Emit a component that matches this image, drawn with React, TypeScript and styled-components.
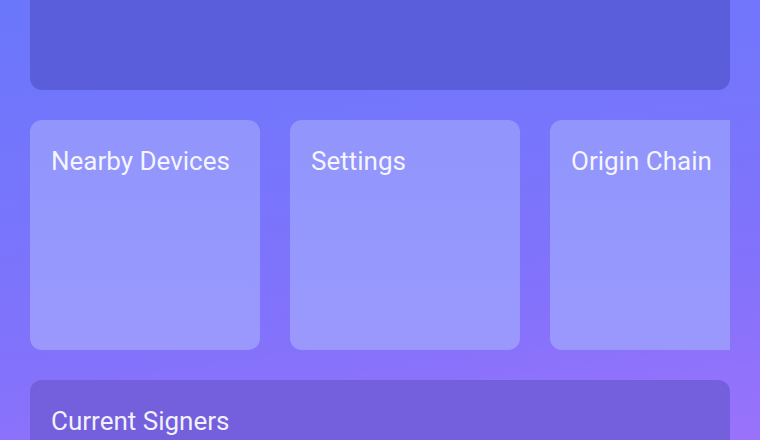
import React from "react";
import styled, { createGlobalStyle } from "styled-components";

const GlobalStyle = createGlobalStyle`
  html, body {
    margin: 0;
    padding: 0;
  }
  body {
    font-family: Roboto, "Liberation Sans", sans-serif;
    overflow: hidden;
  }
`;

const tiles = ["Nearby Devices", "Settings", "Origin Chain"];

const App = () => {
  return (
    <>
      <GlobalStyle />
      <Page>
        <Banner />
        <Scroller>
          {tiles.map((t) => (
            <Tile key={t}>
              <Title>{t}</Title>
            </Tile>
          ))}
        </Scroller>
        <Panel>
          <Title>Current Signers</Title>
        </Panel>
      </Page>
    </>
  );
};

export default App;

const Page = styled.div`
  width: 760px;
  height: 440px;
  box-sizing: border-box;
  padding: 0 30px;
  display: flex;
  flex-direction: column;
  gap: 30px;
  overflow: hidden;
  background: linear-gradient(172deg, #6a76fb 0%, #7676fc 35%, #8472fb 70%, #9a72fb 100%);
`;

const Banner = styled.div`
  flex: none;
  height: 130px;
  margin-top: -40px;
  border-radius: 12px;
  background-color: #5a5edb;
`;

const Scroller = styled.div`
  flex: none;
  display: flex;
  gap: 30px;
  width: 700px;
  overflow: hidden;
`;

const Tile = styled.div`
  flex: none;
  width: 230px;
  height: 230px;
  box-sizing: border-box;
  padding: 26px 21px;
  border-radius: 12px;
  background: linear-gradient(180deg, #9195fc 0%, #9698fd 60%, #9b98fd 100%);
`;

const Panel = styled.div`
  flex: none;
  height: 200px;
  box-sizing: border-box;
  padding: 26px 21px;
  border-radius: 12px;
  background-color: #7460dc;
`;

const Title = styled.div`
  color: rgba(255, 255, 255, 0.92);
  font-size: 26px;
  font-weight: 400;
  line-height: 30px;
  white-space: nowrap;
`;
